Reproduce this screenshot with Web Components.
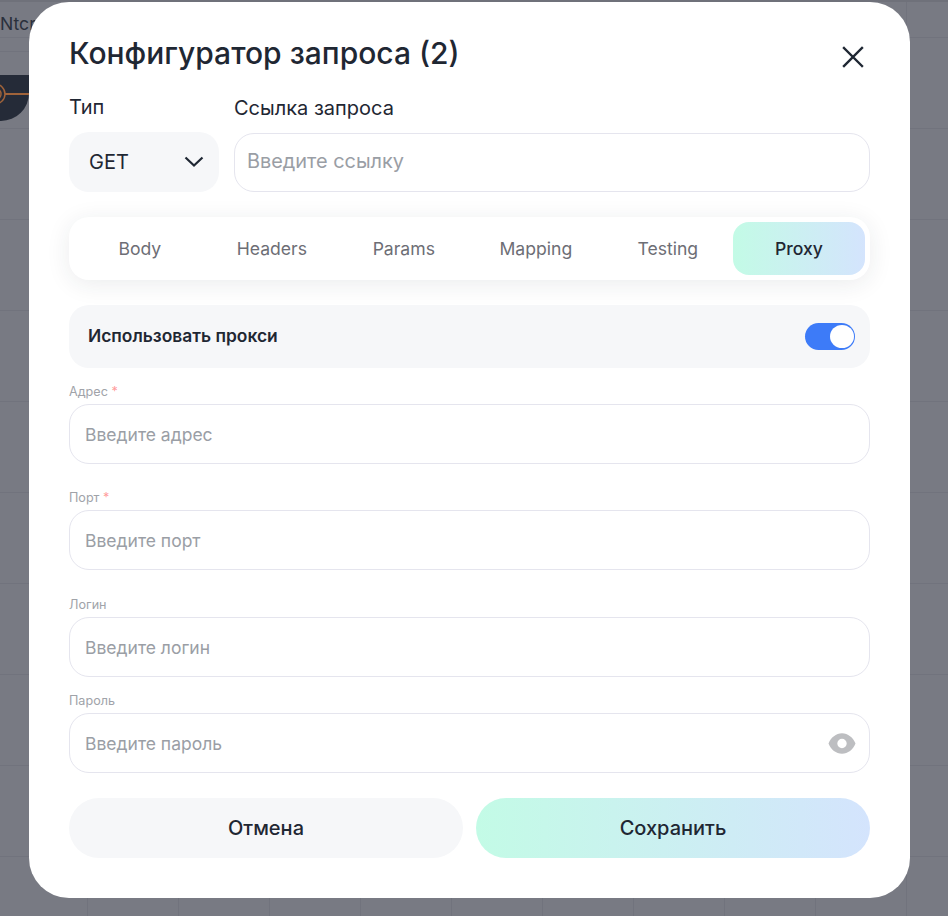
<!DOCTYPE html>
<html lang="ru">
<head>
<meta charset="utf-8">
<title>Конфигуратор запроса</title>
<style>
  html, body { margin: 0; height: 100%; }
  body { font-family: Inter, "Noto Sans", sans-serif; color: #1f2733; overflow: hidden; }
</style>
</head>
<body>
<app-backdrop>
  <request-modal heading="Конфигуратор запроса (2)">
    <div slot="top">
      <type-select label="Тип" value="GET"></type-select>
      <url-field label="Ссылка запроса" placeholder="Введите ссылку"></url-field>
    </div>
    <tab-bar slot="tabs" tabs="Body,Headers,Params,Mapping,Testing,Proxy" active="Proxy"></tab-bar>
    <toggle-row slot="toggle" label="Использовать прокси"></toggle-row>
    <form-field slot="fields" label="Адрес" placeholder="Введите адрес" required gap="26"></form-field>
    <form-field slot="fields" label="Порт" placeholder="Введите порт" required gap="27"></form-field>
    <form-field slot="fields" label="Логин" placeholder="Введите логин" gap="16"></form-field>
    <form-field slot="fields" label="Пароль" placeholder="Введите пароль" eye gap="0"></form-field>
    <modal-button slot="actions">Отмена</modal-button>
    <modal-button slot="actions" primary>Сохранить</modal-button>
  </request-modal>
</app-backdrop>

<script>
const GRADIENT = 'linear-gradient(90deg, #c3fbe6 0%, #d4e4fd 100%)';

class AppBackdrop extends HTMLElement {
  constructor() {
    super();
    this.attachShadow({ mode: 'open' }).innerHTML = `
      <style>
        :host {
          display: flex;
          position: relative;
          width: 948px;
          height: 916px;
          box-sizing: border-box;
          padding: 2px 38px 18px 29px;
          overflow: hidden;
          background-color: #787a83;
          background-image:
            repeating-linear-gradient(180deg, transparent 0 37px, #71737d 37px 38px, transparent 38px 91px),
            repeating-linear-gradient(90deg, transparent 0 87px, #71737d 87px 88px, transparent 88px 91px);
        }
        .top { position: absolute; left: 0; right: 0; top: 0; height: 2px; background: #6f717a; }
        .word { position: absolute; left: 0; top: 13px; font-size: 17.6px; line-height: 21px; color: #2a303c; }
        .rule { position: absolute; left: 0; top: 51px; width: 29px; height: 1px; background: #71737d; }
        .node { position: absolute; left: 0; top: 75px; width: 29px; height: 46px;
          background: #252b38; border-bottom-right-radius: 28px; }
        .node svg { display: block; }
      </style>
      <div class="top"></div>
      <div class="word">Ntcr</div>
      <div class="rule"></div>
      <div class="node">
        <svg width="29" height="46" viewBox="0 0 29 46" fill="none" stroke="#a0633a">
          <circle cx="-5" cy="19" r="10" stroke-width="1.5"/>
          <circle cx="-5" cy="19" r="6" stroke-width="1.5"/>
          <path d="M5 19H29" stroke-width="2"/>
        </svg>
      </div>
      <slot></slot>`;
  }
}

class RequestModal extends HTMLElement {
  constructor() {
    super();
    this.attachShadow({ mode: 'open' }).innerHTML = `
      <style>
        :host {
          display: block;
          position: relative;
          z-index: 1;
          width: 881px;
          height: 896px;
          box-sizing: border-box;
          padding: 32px 40px 0;
          background: #fff;
          border-radius: 40px;
        }
        header { display: flex; justify-content: space-between; align-items: flex-start; height: 68px; }
        h2 { margin: -1px 0 0; font-size: 30px; line-height: 40px; font-weight: 500; color: #1f2733; }
        .close { margin: 10px 4px 0 0; width: 26px; height: 26px; }
        ::slotted([slot="top"]) { display: flex; gap: 15px; }
        .tabs { margin-top: 25px; }
        .toggle { margin-top: 25px; }
        .fields { margin-top: 16px; }
        .actions { display: grid; grid-template-columns: 394px 394px; gap: 13px; margin-top: 25px; }
      </style>
      <header>
        <h2></h2>
        <svg class="close" viewBox="0 0 26 26" fill="none" stroke="#1f2733" stroke-width="2.4" stroke-linecap="square">
          <path d="M4 4L22 22M22 4L4 22"/>
        </svg>
      </header>
      <slot name="top"></slot>
      <div class="tabs"><slot name="tabs"></slot></div>
      <div class="toggle"><slot name="toggle"></slot></div>
      <div class="fields"><slot name="fields"></slot></div>
      <div class="actions"><slot name="actions"></slot></div>`;
  }

  connectedCallback() {
    this.shadowRoot.querySelector('h2').textContent = this.getAttribute('heading') || '';
  }
}

class TypeSelect extends HTMLElement {
  constructor() {
    super();
    this.attachShadow({ mode: 'open' }).innerHTML = `
      <style>
        :host { display: block; width: 150px; flex: none; }
        label { display: block; font-size: 20px; line-height: 24px; height: 37px; color: #1f2733; margin-top: -7px; }
        .box {
          display: flex; align-items: center; justify-content: space-between;
          height: 60px; box-sizing: border-box; padding: 0 15px 0 20px;
          background: #f6f7f9; border-radius: 20px;
          font-size: 20px; color: #1f2733;
        }
      </style>
      <label></label>
      <div class="box">
        <span></span>
        <svg width="20" height="12" viewBox="0 0 20 12" fill="none" stroke="#1f2733" stroke-width="2.2">
          <path d="M1.5 1.5L10 9.5L18.5 1.5"/>
        </svg>
      </div>`;
  }

  connectedCallback() {
    this.shadowRoot.querySelector('label').textContent = this.getAttribute('label');
    this.shadowRoot.querySelector('span').textContent = this.getAttribute('value');
  }
}

class UrlField extends HTMLElement {
  constructor() {
    super();
    this.attachShadow({ mode: 'open' }).innerHTML = `
      <style>
        :host { display: block; flex: 1; }
        label { display: block; font-size: 20px; line-height: 24px; height: 37px; margin-top: -6px; color: #1f2733; }
        .box {
          display: flex; align-items: center;
          height: 59px; box-sizing: border-box; padding: 0 12px 4px;
          border: 1px solid #e5e5ee; border-radius: 20px;
          font-size: 19.9px; color: #9a9ea5;
        }
      </style>
      <label></label>
      <div class="box"></div>`;
  }

  connectedCallback() {
    this.shadowRoot.querySelector('label').textContent = this.getAttribute('label');
    this.shadowRoot.querySelector('.box').textContent = this.getAttribute('placeholder');
  }
}

class TabBar extends HTMLElement {
  constructor() {
    super();
    this.attachShadow({ mode: 'open' }).innerHTML = `
      <style>
        :host {
          display: grid;
          grid-template-columns: repeat(6, 132px);
          height: 63px;
          box-sizing: border-box;
          padding: 5px 4px;
          background: #fff;
          border-radius: 20px;
          box-shadow: 0 4px 24px rgba(30, 40, 60, 0.09);
        }
        div {
          display: flex; align-items: center; justify-content: center;
          padding-left: 1.6px;
          border-radius: 16px;
          font-size: 17.6px; color: #6d6e75;
        }
        .active { padding-left: 0; background: ${GRADIENT}; color: #1f2733; font-weight: 500; }
      </style>`;
  }

  connectedCallback() {
    const active = this.getAttribute('active');
    this.getAttribute('tabs').split(',').forEach((name) => {
      const tab = document.createElement('div');
      tab.textContent = name;
      if (name === active) tab.className = 'active';
      this.shadowRoot.appendChild(tab);
    });
  }
}

class ToggleRow extends HTMLElement {
  constructor() {
    super();
    this.attachShadow({ mode: 'open' }).innerHTML = `
      <style>
        :host {
          display: flex; align-items: center; justify-content: space-between;
          height: 63px; box-sizing: border-box; padding: 0 15px 0 19px;
          background: #f6f7f9; border-radius: 20px;
          font-size: 17.4px; font-weight: 600; color: #1f2733;
        }
        span { margin-top: -2px; }
        .switch {
          display: flex; justify-content: flex-end; align-items: center;
          width: 50px; height: 27px; margin-top: -1px; box-sizing: border-box; padding: 2px 1.5px;
          background: #3d7bf8; border-radius: 14px;
        }
        .knob { width: 24px; height: 23px; border-radius: 50%; background: #fff; }
      </style>
      <span></span>
      <div class="switch"><div class="knob"></div></div>`;
  }

  connectedCallback() {
    this.shadowRoot.querySelector('span').textContent = this.getAttribute('label');
  }
}

class FormField extends HTMLElement {
  constructor() {
    super();
    this.attachShadow({ mode: 'open' }).innerHTML = `
      <style>
        :host { display: block; }
        label { display: block; font-size: 12.6px; line-height: 15px; height: 20px; color: #a0a3a9; }
        b { font-weight: 400; color: #ff9c9c; }
        .box {
          display: flex; align-items: center; justify-content: space-between;
          height: 60px; box-sizing: border-box; padding: 0 13px 0 15px;
          border: 1px solid #e5e5ee; border-radius: 20px;
          font-size: 17.5px; color: #9a9ea5;
        }
      </style>
      <label></label>
      <div class="box"><span></span></div>`;
  }

  connectedCallback() {
    const root = this.shadowRoot;
    root.querySelector('label').textContent = this.getAttribute('label');
    if (this.hasAttribute('required')) {
      root.querySelector('label').insertAdjacentHTML('beforeend', ' <b>*</b>');
    }
    root.querySelector('span').textContent = this.getAttribute('placeholder');
    this.style.marginBottom = (this.getAttribute('gap') || 0) + 'px';
    if (this.hasAttribute('eye')) {
      root.querySelector('.box').insertAdjacentHTML('beforeend', `
        <svg width="28" height="21" viewBox="0 0 28 21">
          <path fill="#bdbec1" fill-rule="evenodd" d="M0.5 10.5C3 4.5 8 0.25 14 0.25s11 4.25 13.5 10.25C25 16.5 20 20.75 14 20.75S3 16.5 0.5 10.5ZM14 5.8a4.7 4.7 0 1 0 0 9.4a4.7 4.7 0 0 0 0-9.4Z"/>
        </svg>`);
    }
  }
}

class ModalButton extends HTMLElement {
  constructor() {
    super();
    this.attachShadow({ mode: 'open' }).innerHTML = `
      <style>
        :host {
          display: flex; align-items: center; justify-content: center;
          height: 60px; border-radius: 30px;
          background: #f6f7f9;
          font-size: 20px; font-weight: 500; color: #1f2733;
        }
        :host([primary]) { background: ${GRADIENT}; }
      </style>
      <slot></slot>`;
  }
}

customElements.define('app-backdrop', AppBackdrop);
customElements.define('request-modal', RequestModal);
customElements.define('type-select', TypeSelect);
customElements.define('url-field', UrlField);
customElements.define('tab-bar', TabBar);
customElements.define('toggle-row', ToggleRow);
customElements.define('form-field', FormField);
customElements.define('modal-button', ModalButton);
</script>
</body>
</html>
